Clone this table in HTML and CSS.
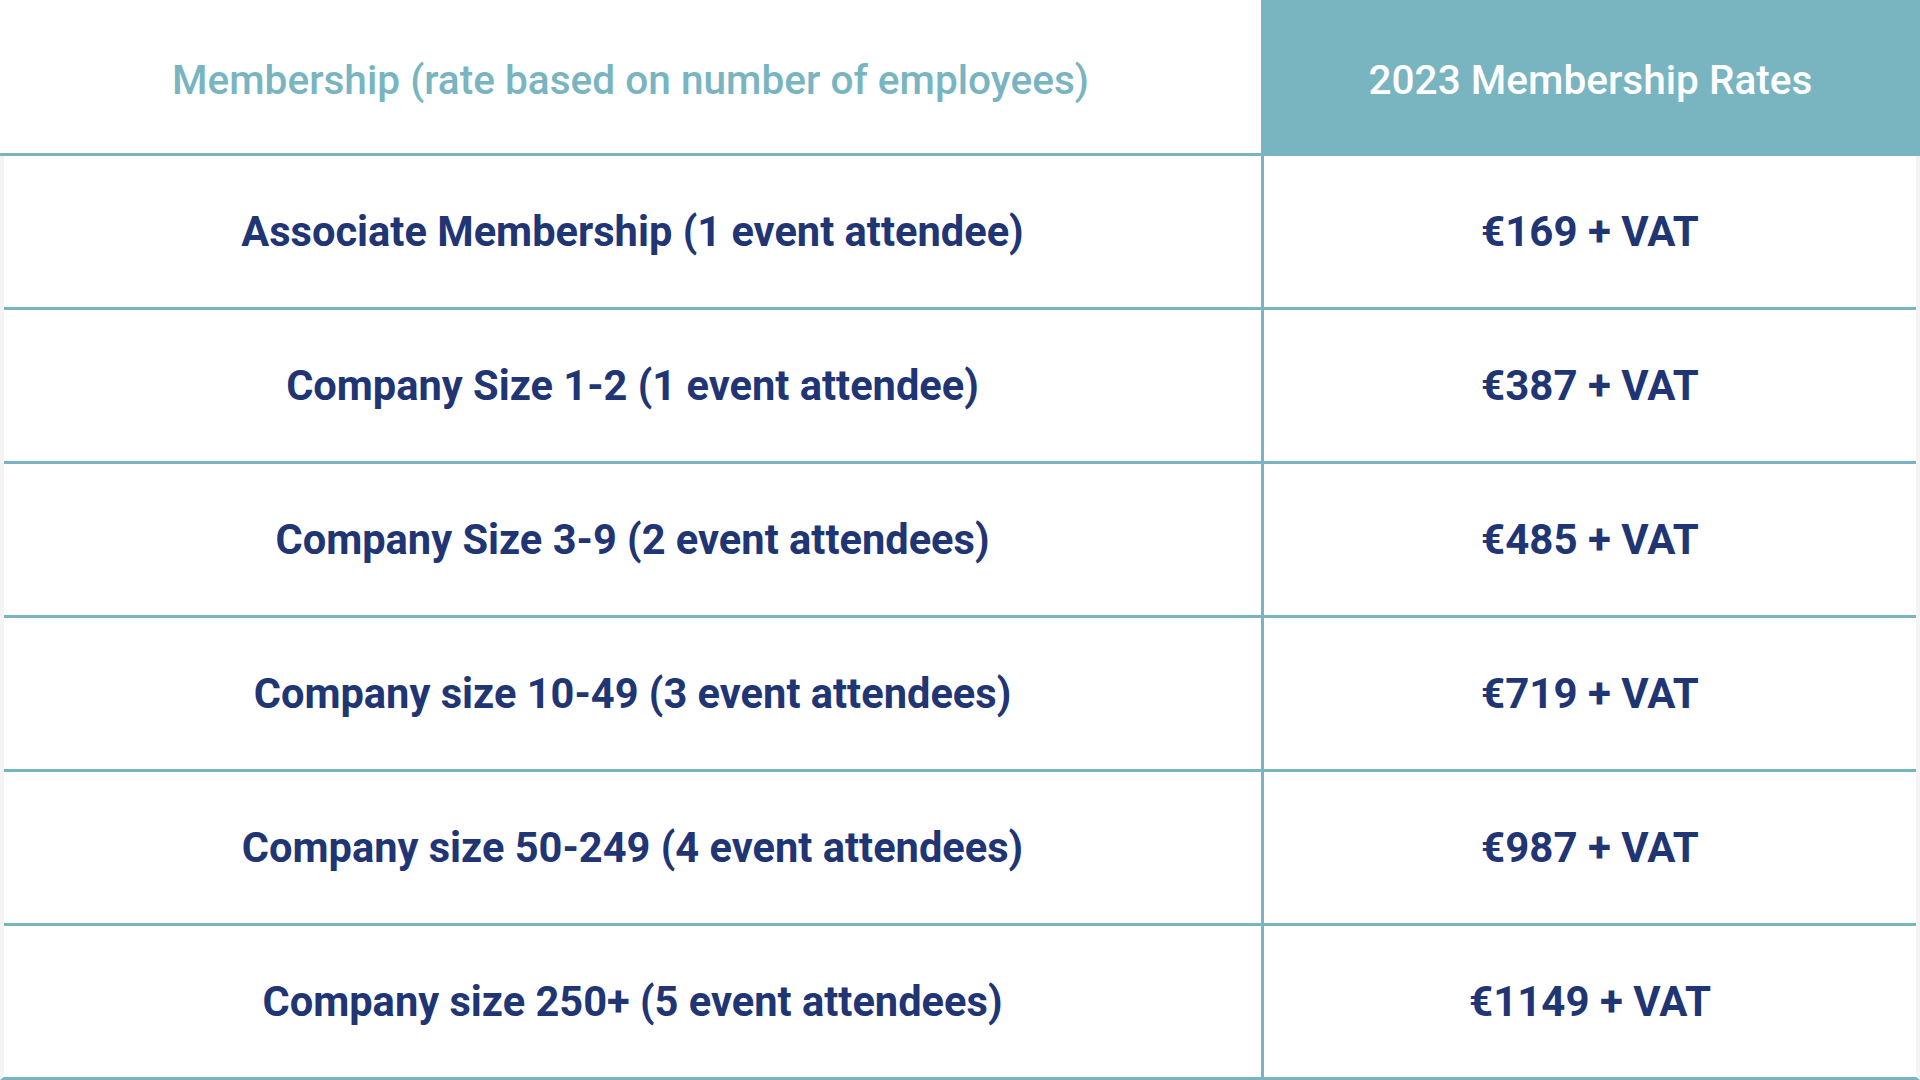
FILE: index.html
```html
<!DOCTYPE html>
<html lang="en">
<head>
<meta charset="utf-8">
<title>2023 Membership Rates</title>
<link rel="stylesheet" href="styles.css">
</head>
<body>
<div class="rates">
  <div class="head">
    <div class="hcell hcell-left">Membership (rate based on number of employees)</div>
    <div class="hcell hcell-right">2023 Membership Rates</div>
  </div>
  <div class="body">
    <div class="row">
      <div class="cell name">Associate Membership (1 event attendee)</div>
      <div class="cell price">€169 + VAT</div>
    </div>
    <div class="row">
      <div class="cell name">Company Size 1-2 (1 event attendee)</div>
      <div class="cell price">€387 + VAT</div>
    </div>
    <div class="row">
      <div class="cell name">Company Size 3-9 (2 event attendees)</div>
      <div class="cell price">€485 + VAT</div>
    </div>
    <div class="row">
      <div class="cell name">Company size 10-49 (3 event attendees)</div>
      <div class="cell price">€719 + VAT</div>
    </div>
    <div class="row">
      <div class="cell name">Company size 50-249 (4 event attendees)</div>
      <div class="cell price">€987 + VAT</div>
    </div>
    <div class="row">
      <div class="cell name">Company size 250+ (5 event attendees)</div>
      <div class="cell price">€1149 + VAT</div>
    </div>
  </div>
</div>
</body>
</html>
```
FILE: styles.css
```css
html, body {
  margin: 0;
  padding: 0;
  background: #ffffff;
}

.rates {
  width: 1920px;
  height: 1080px;
  display: flex;
  flex-direction: column;
}

.head {
  display: grid;
  grid-template-columns: 1261px 1fr;
  height: 156px;
  flex: none;
}

.hcell {
  display: flex;
  align-items: center;
  justify-content: center;
  font-family: Roboto, "Noto Sans", sans-serif;
  font-weight: 500;
  font-size: 40.6px;
}

.hcell-left {
  color: #79b4c1;
  border-bottom: 3px solid #79b4c1;
  padding-top: 6px;
}

.hcell-right {
  background: #79b4c1;
  color: #ffffff;
  padding-top: 3px;
}

.body {
  flex: 1;
  display: flex;
  flex-direction: column;
  border-left: 4px solid #f4f4f4;
  border-right: 4px solid #f4f4f4;
  border-bottom: 3px solid #79b4c1;
}

.row {
  flex: 1;
  display: grid;
  grid-template-columns: 1257px 1fr;
  border-bottom: 3px solid #79b4c1;
}

.row:last-child {
  border-bottom: none;
}

.cell {
  display: flex;
  align-items: center;
  justify-content: center;
  font-family: Roboto, "Liberation Sans", sans-serif;
  font-weight: 700;
  color: #1f3574;
}

.name {
  font-size: 41.6px;
}

.price {
  font-size: 42px;
  border-left: 3px solid #79b4c1;
}
```
